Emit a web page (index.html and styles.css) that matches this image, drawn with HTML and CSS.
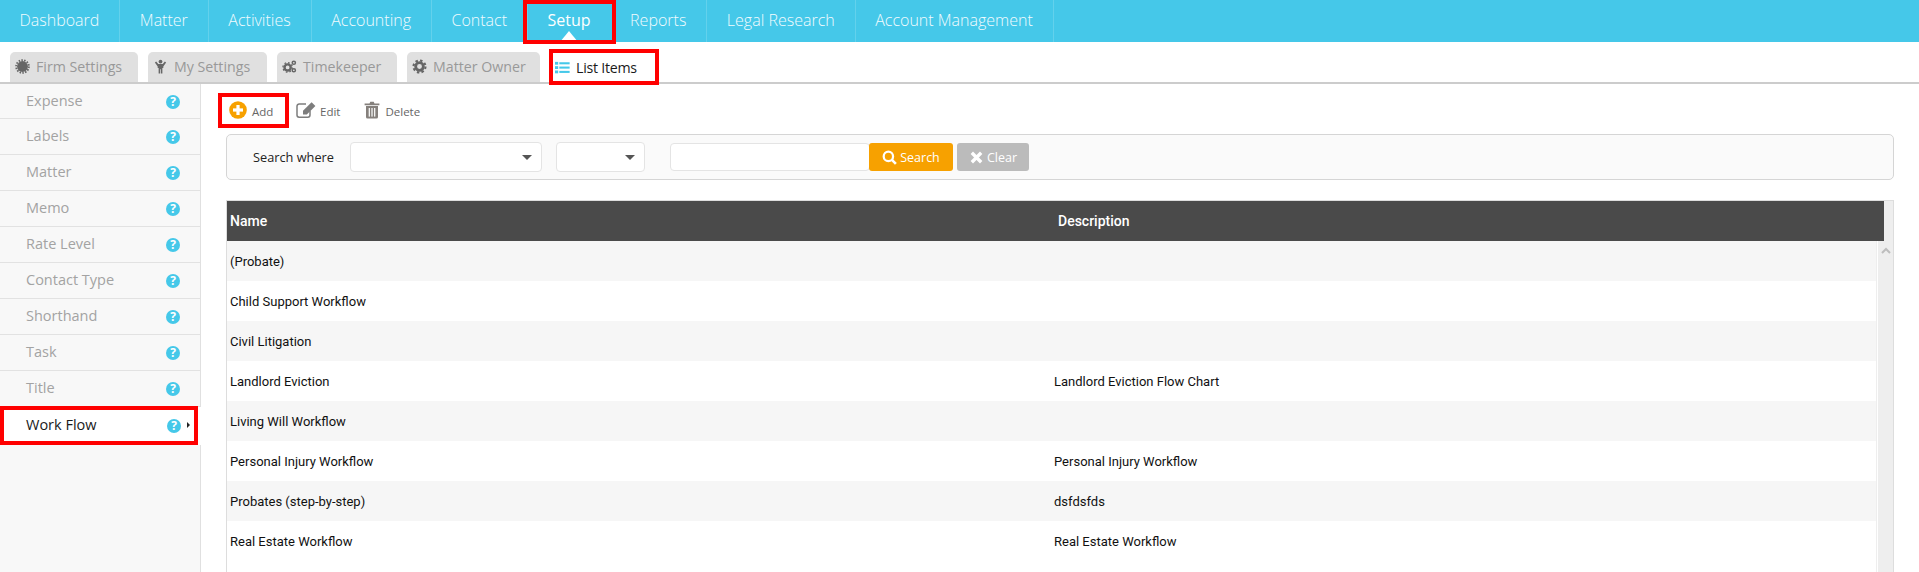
FILE: index.html
```html
<!DOCTYPE html>
<html lang="en">
<head>
<meta charset="utf-8">
<title>List Items</title>
<link rel="stylesheet" href="styles.css">
</head>
<body>
<nav class="nav">
  <a class="nav-item">Dashboard</a>
  <a class="nav-item">Matter</a>
  <a class="nav-item">Activities</a>
  <a class="nav-item">Accounting</a>
  <a class="nav-item">Contact</a>
  <a class="nav-item nav-active">Setup<span class="nav-caret"></span><span class="mark mark-setup"></span></a>
  <a class="nav-item">Reports</a>
  <a class="nav-item">Legal Research</a>
  <a class="nav-item">Account Management</a>
</nav>
<div class="tabs">
  <a class="tab tab-firm"><svg class="tab-icon" viewBox="0 0 16 16"><circle cx="8" cy="8" r="5.8" fill="#666"/><circle cx="8" cy="8" r="6.8" fill="none" stroke="#666" stroke-width="2" stroke-dasharray="1.6 1.4"/></svg>Firm Settings</a>
  <a class="tab tab-my"><svg class="tab-icon" viewBox="0 0 16 16"><path d="M3.4 2.6 L5.6 5.4 H10.4 L12.6 2.6 L14 3.6 L11 8 V9.6 H10 V15.5 H8.4 V11 H7.6 V15.5 H6 V9.6 H5 V8 L2 3.6 Z" fill="#666"/><circle cx="8" cy="2.7" r="2" fill="#666"/></svg>My Settings</a>
  <a class="tab tab-time"><svg class="tab-icon" viewBox="0 0 16 16"><circle cx="6" cy="9" r="3.3" fill="none" stroke="#666" stroke-width="2.6"/><circle cx="6" cy="9" r="5" fill="none" stroke="#666" stroke-width="1.4" stroke-dasharray="1.8 2.1"/><circle cx="12.6" cy="4" r="1.7" fill="none" stroke="#666" stroke-width="1.6"/><circle cx="12.6" cy="12" r="1.7" fill="none" stroke="#666" stroke-width="1.6"/></svg>Timekeeper</a>
  <a class="tab tab-owner"><svg class="tab-icon" viewBox="0 0 16 16"><circle cx="8" cy="8" r="4.1" fill="none" stroke="#666" stroke-width="3"/><circle cx="8" cy="8" r="6.4" fill="none" stroke="#666" stroke-width="2.2" stroke-dasharray="2.6 2.4"/></svg>Matter Owner</a>
  <a class="tab tab-active"><svg class="tab-icon" viewBox="0 0 16 16"><g fill="#45c8e9"><rect x="0" y="2" width="3.4" height="3"/><rect x="0" y="6.6" width="3.4" height="3"/><rect x="0" y="11.2" width="3.4" height="3"/><rect x="4.6" y="2.4" width="11" height="2.2"/><rect x="4.6" y="7" width="11" height="2.2"/><rect x="4.6" y="11.6" width="11" height="2.2"/></g></svg>List Items<span class="mark mark-tab"></span></a>
</div>
<div class="body">
  <aside class="side">
    <div class="side-item"><span>Expense</span><i class="help">?</i></div>
    <div class="side-item"><span>Labels</span><i class="help">?</i></div>
    <div class="side-item"><span>Matter</span><i class="help">?</i></div>
    <div class="side-item"><span>Memo</span><i class="help">?</i></div>
    <div class="side-item"><span>Rate Level</span><i class="help">?</i></div>
    <div class="side-item"><span>Contact Type</span><i class="help">?</i></div>
    <div class="side-item"><span>Shorthand</span><i class="help">?</i></div>
    <div class="side-item"><span>Task</span><i class="help">?</i></div>
    <div class="side-item"><span>Title</span><i class="help">?</i></div>
    <div class="side-item side-active"><span>Work Flow</span><i class="help">?</i><b class="side-arrow"></b><span class="mark mark-side"></span></div>
  </aside>
  <main class="main">
    <div class="tools">
      <a class="tool tool-add"><svg class="tool-icon" viewBox="0 0 18 18"><circle cx="9" cy="9" r="8.8" fill="#f7a100"/><rect x="7.4" y="4" width="3.2" height="10" fill="#fff"/><rect x="4" y="7.4" width="10" height="3.2" fill="#fff"/></svg>Add<span class="mark mark-add"></span></a>
      <a class="tool tool-edit"><svg class="tool-icon" viewBox="0 0 21 18"><path d="M14 9.5 V14 a2.2 2.2 0 0 1 -2.2 2.2 H3.2 A2.2 2.2 0 0 1 1 14 V5.2 A2.2 2.2 0 0 1 3.2 3 H10" fill="none" stroke="#7d7d7d" stroke-width="1.5"/><path d="M7 9.8 L15.6 1.2 L19.4 5 L10.8 13.6 L7 13.6 Z" fill="#7d7d7d"/></svg>Edit</a>
      <a class="tool tool-del"><svg class="tool-icon" viewBox="0 0 16 18"><path d="M5.5 2.6 L6.3 .8 H9.7 L10.5 2.6 H15.4 V4.2 H.6 V2.6 Z" fill="#85807c"/><path d="M2 5 H14 V16 a1.6 1.6 0 0 1 -1.6 1.6 H3.6 A1.6 1.6 0 0 1 2 16 Z" fill="#85807c"/><g fill="#fff"><rect x="4.7" y="7" width="1.2" height="8.6"/><rect x="7.4" y="7" width="1.2" height="8.6"/><rect x="10.1" y="7" width="1.2" height="8.6"/></g></svg>Delete</a>
    </div>
    <form class="search">
      <label class="search-label">Search where</label>
      <div class="select select-a"><b class="select-arrow"></b></div>
      <div class="select select-b"><b class="select-arrow"></b></div>
      <div class="input"></div>
      <a class="btn btn-search"><svg class="btn-icon" viewBox="0 0 16 16"><circle cx="6.8" cy="6.8" r="5" fill="none" stroke="#fff" stroke-width="2.4"/><path d="M10.6 10.6 L14.8 14.8" stroke="#fff" stroke-width="2.8"/></svg>Search</a>
      <a class="btn btn-clear"><svg class="btn-icon" viewBox="0 0 16 16"><path d="M3 3 L13 13 M13 3 L3 13" stroke="#fff" stroke-width="3.6"/></svg>Clear</a>
    </form>
    <div class="grid">
      <div class="grid-head">
        <div class="row row-head"><div class="cell-name">Name</div><div class="cell-desc">Description</div></div>
      </div>
      <div class="grid-body">
        <div class="rows">
          <div class="row"><div class="cell-name">(Probate)</div><div class="cell-desc"></div></div>
          <div class="row"><div class="cell-name">Child Support Workflow</div><div class="cell-desc"></div></div>
          <div class="row"><div class="cell-name">Civil Litigation</div><div class="cell-desc"></div></div>
          <div class="row"><div class="cell-name">Landlord Eviction</div><div class="cell-desc">Landlord Eviction Flow Chart</div></div>
          <div class="row"><div class="cell-name">Living Will Workflow</div><div class="cell-desc"></div></div>
          <div class="row"><div class="cell-name">Personal Injury Workflow</div><div class="cell-desc">Personal Injury Workflow</div></div>
          <div class="row"><div class="cell-name">Probates (step-by-step)</div><div class="cell-desc">dsfdsfds</div></div>
          <div class="row"><div class="cell-name">Real Estate Workflow</div><div class="cell-desc">Real Estate Workflow</div></div>
        </div>
        <div class="scroll"><svg class="scroll-up" viewBox="0 0 10 7"><path d="M1 6 L5 2 L9 6" fill="none" stroke="#bdbdbd" stroke-width="2"/></svg></div>
      </div>
    </div>
  </main>
</div>
</body>
</html>
```
FILE: styles.css
```css
* { box-sizing: border-box; }
html, body { margin: 0; height: 572px; overflow: hidden; background: #fff; }
body { font-family: "Open Sans", "Liberation Sans", sans-serif; }

.mark { position: absolute; border: 4px solid #f00; pointer-events: none; }

.nav { display: flex; height: 42px; background: #45c8e9; }
.nav-item { position: relative; display: flex; align-items: center; padding: 0 20px 2px 19.5px; border-right: 1px solid #63d1ec; color: #f2fbfe; font-size: 16px; font-weight: 300; }
.nav-active { border-right: 0; font-weight: 400; color: #fff; }
.nav-caret { position: absolute; left: 50%; bottom: 0; margin-left: -9px; border: 9px solid transparent; border-top: 0; border-bottom: 11px solid #fff; }
.mark-setup { left: -5px; right: -5px; top: 0; bottom: -2px; }

.tabs { display: flex; gap: 10px; height: 42px; padding: 10px 0 0 10px; border-bottom: 2px solid #ccc; }
.tab { position: relative; display: flex; align-items: center; gap: 6px; height: 30px; padding: 0 0 2px 5px; background: #e0e0e0; border-radius: 5px 5px 0 0; color: #999; font-size: 14.2px; }
.tab-firm { width: 128px; }
.tab-my { width: 119px; }
.tab-time { width: 120px; }
.tab-owner { width: 133px; }
.tab-active { background: #fff; color: #1a1a1a; margin-left: -1px; width: 110px; height: 32px; padding: 0 0 2px 6px; letter-spacing: -.25px; }
.tab-icon { width: 15px; height: 15px; flex: none; }
.mark-tab { left: 0; right: 0; top: -3px; bottom: -1px; }

.body { display: flex; height: 488px; }
.side { width: 201px; flex: none; background: #f8f8f8; border-right: 1px solid #e0e0e0; }
.side-item { position: relative; display: flex; align-items: center; height: 36px; padding: 0 20px 2px 26px; border-bottom: 1px solid #e2e2e2; color: #a3a3a3; font-size: 14.5px; }
.side-item:first-child { height: 35px; }
.side-item span:first-child { flex: 1; }
.help { width: 14px; height: 14px; margin-top: 3px; border-radius: 50%; background: #45c8e9; color: #fff; font: bold 12px/14px "Open Sans", sans-serif; text-align: center; }
.side-active { background: #fff; color: #1a1a1a; margin-right: -1px; height: 38px; padding-bottom: 4px; border-bottom: 0; }
.side-arrow { position: absolute; left: 187px; top: 15px; border: 3px solid transparent; border-left: 3px solid #222; border-right: 0; }
.mark-side { left: 0; right: 3px; top: -1px; bottom: 0; }

.main { flex: 1; min-width: 0; padding: 0 25px 0 25px; }
.tools { display: flex; align-items: center; height: 50px; padding-top: 4px; color: #666; font-size: 11.5px; }
.tool { position: relative; display: flex; align-items: center; }
.tool-add { gap: 5px; margin-left: 3px; width: 63px; }
.tool-edit { gap: 3px; margin-left: 4px; }
.tool-del { gap: 5px; margin-left: 24px; }
.tool-icon { height: 18px; width: auto; flex: none; margin-top: -2px; }
.tool-add .tool-icon { width: 18px; }
.tool-edit .tool-icon { width: 21px; }
.tool-del .tool-icon { width: 16px; }
.mark-add { left: -11px; top: -10px; width: 71px; height: 35px; }

.search { display: flex; align-items: center; width: 1668px; height: 46px; padding-left: 26px; background: #fafafa; border: 1px solid #d5d5d5; border-radius: 5px; color: #222; font-size: 12.75px; }
.search-label { width: 97px; }
.select { position: relative; height: 30px; background: #fff; border: 1px solid #e4e4e4; border-radius: 4px; }
.select-a { width: 192px; }
.select-b { width: 89px; margin-left: 14px; }
.select-arrow { position: absolute; right: 9px; top: 12px; border: 5px solid transparent; border-top: 5px solid #555; border-bottom: 0; }
.input { width: 200px; height: 28px; margin-left: 25px; background: #fff; border: 1px solid #e4e4e4; border-radius: 4px; }
.btn { display: flex; align-items: center; justify-content: center; gap: 3px; height: 28px; border-radius: 3px; color: #fff; font-size: 12.5px; }
.btn-search { width: 84px; margin-left: -1px; background: #f7a100; }
.btn-clear { width: 72px; margin-left: 4px; background: #bbb; }
.btn-icon { width: 15px; height: 15px; flex: none; }

.grid { width: 1668px; margin-top: 20px; border-top: 1px solid #ddd; border-left: 1px solid #ddd; border-right: 1px solid #ddd; background: #eee; font-family: Roboto, "Liberation Sans", sans-serif; font-size: 13px; color: #111; }
.grid-head { padding-right: 9px; }
.row { display: flex; align-items: center; height: 40px; background: #fff; }
.row:nth-child(odd) { background: #f6f6f6; }
.row-head.row-head { height: 40px; background: #4a4a4a; color: #fff; font-size: 14px; font-weight: 500; }
.cell-name { width: 827px; padding-left: 3px; flex: none; }
.row-head .cell-desc { padding-left: 4px; }
.grid-body { display: flex; height: 331px; }
.rows { flex: 1; min-width: 0; background: #fff; }
.scroll { width: 16px; flex: none; margin-left: 1px; display: flex; justify-content: center; align-items: flex-start; background: #eee; border-left: 1px solid #fff; }
.scroll-up { width: 10px; height: 7px; margin-top: 6px; }
```
